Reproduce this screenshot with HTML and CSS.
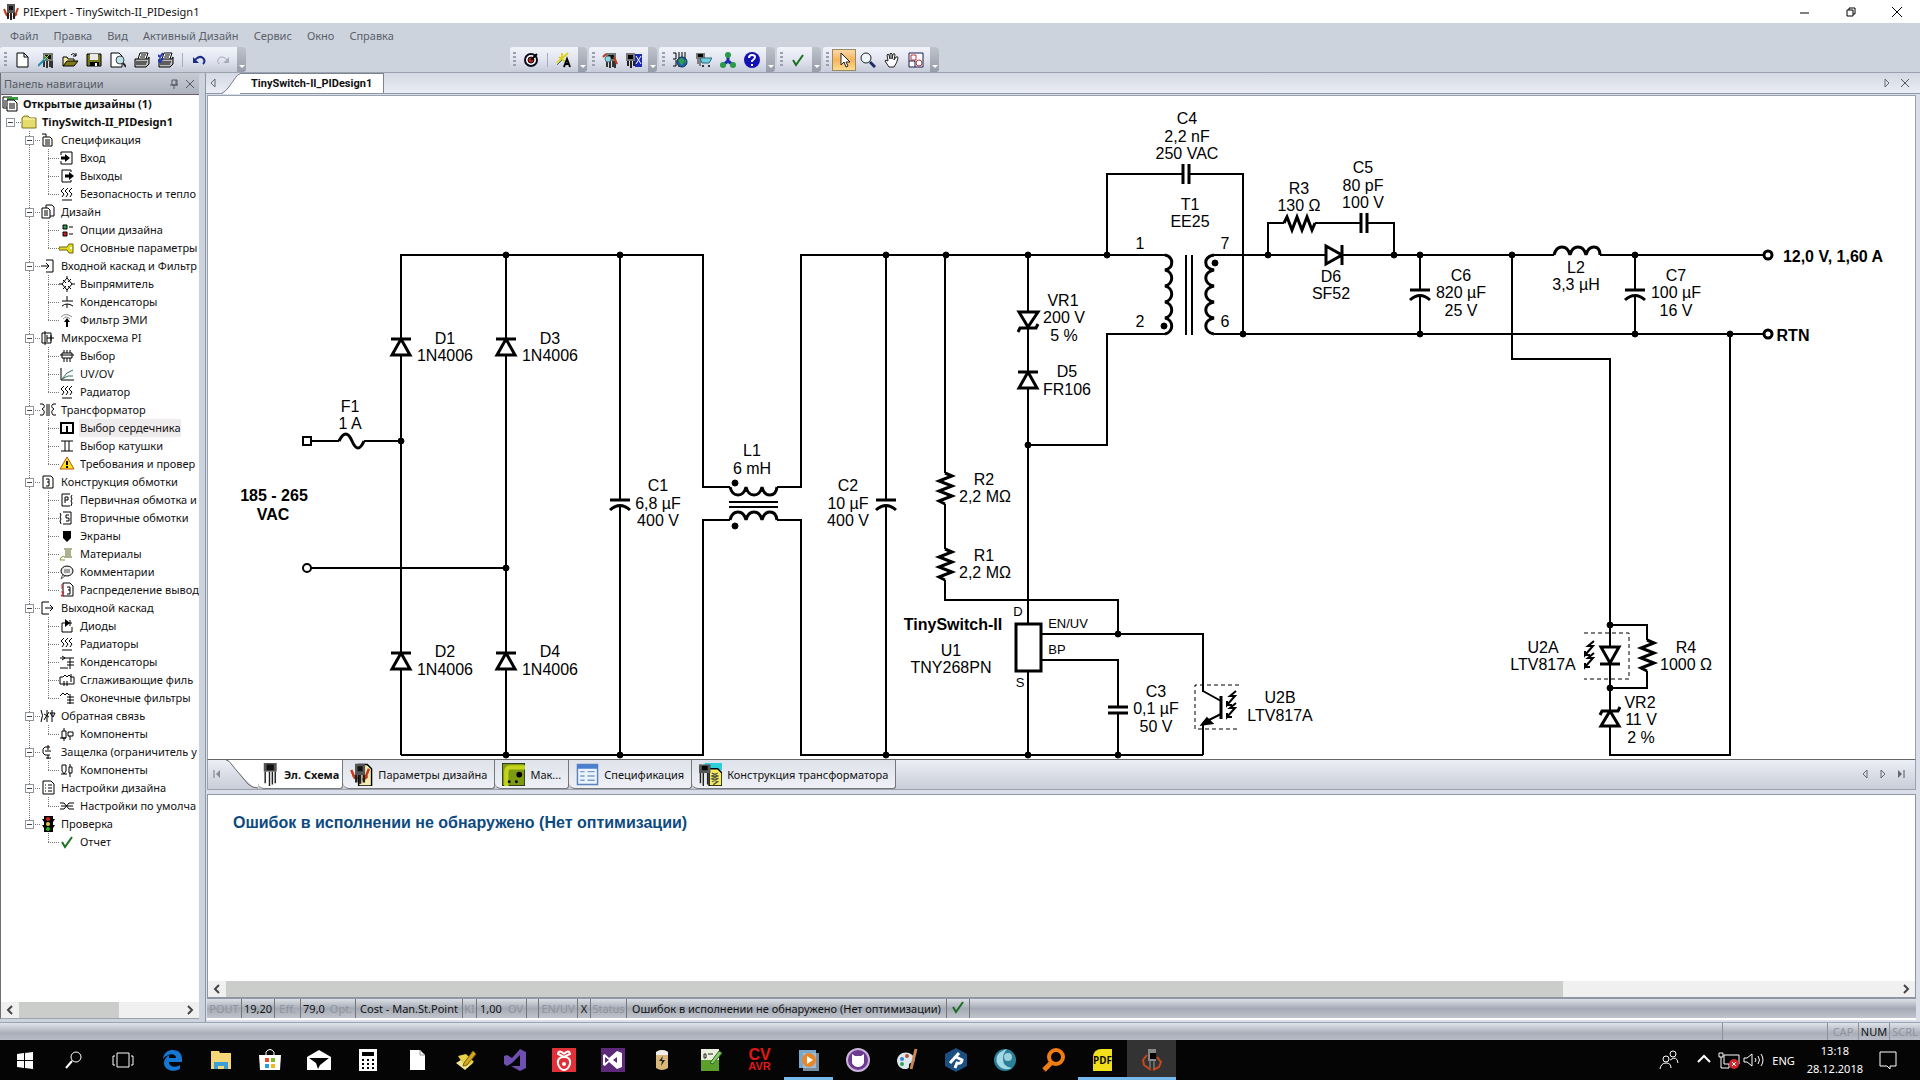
FILE: index.html
```html
<!DOCTYPE html>
<html lang="ru">
<head>
    <meta charset="UTF-8">
    <meta name="viewport" content="width=device-width, initial-scale=1.0">
    <title>PIExpert - TinySwitch-II_PIDesign1</title>
    <link rel="stylesheet" href="styles.css">
</head>
<body>
    <!-- icon sprites -->
    <svg class="sprites">
        <symbol id="chip" viewBox="0 0 16 16"><path d="M3 1h10v8H3z" fill="#777"/><path d="M5 3h6v4H5z" fill="#111"/><path d="M4 9v6M7 9v7M10 9v6M12 9v7" stroke="#333" stroke-width="2"/></symbol>
        <symbol id="longchip" viewBox="0 0 16 16"><path d="M4 0h9v6H4z" fill="#555"/><path d="M6 1h5v4H6z" fill="#111"/><path d="M5 6v8M8 6v10M10 6v9M12 6v8" stroke="#222"/></symbol>
        <symbol id="app" viewBox="0 0 16 16"><path d="M1 5l3 7M15 4l-3 8M2 9l4 3M14 10l-4 3" stroke="#c43a1c" stroke-width="2"/><path d="M4 0h8v9H4z" fill="#555"/><path d="M6 2h4v4H6z" fill="#111"/><path d="M5 9v6M8 9v7M11 9v6" stroke="#222" stroke-width="2"/></symbol>
        <symbol id="docs" viewBox="0 0 16 16"><path d="M1 1h9l2 2v9H1z" fill="#fff" stroke="#000"/><path d="M5 1h11v3H5z" fill="#3a9a3a"/><path d="M5 4h7l3 3v8H5z" fill="#fff" stroke="#000"/><path d="M7 8h6M7 10h6M7 12h6M3 4v7" stroke="#000"/></symbol>
        <symbol id="folder" viewBox="0 0 16 16"><path d="M1 4l2-2h4l2 2h6v10H1z" fill="#e6dc6e" stroke="#7d7720"/><path d="M2 5h12" stroke="#fffbc0"/></symbol>
        <symbol id="page" viewBox="0 0 16 16"><path d="M3 5h7l2 2v7H3zM2 2h4v3" fill="#fff" stroke="#000"/><path d="M5 8h5M5 10h5M5 12h5" stroke="#000"/></symbol>
        <symbol id="in" viewBox="0 0 16 16"><path d="M2 5V2h11v12H2v-3" fill="none" stroke="#000"/><path d="M2 8h5" stroke="#000" stroke-width="3"/><path d="M6 4l5 4-5 4z"/></symbol>
        <symbol id="out" viewBox="0 0 16 16"><path d="M12 4V2H3v12h9v-2" fill="none" stroke="#000"/><path d="M6 8h5" stroke="#000" stroke-width="3"/><path d="M10 4l5 4-5 4z"/></symbol>
        <symbol id="heat" viewBox="0 0 16 16"><path d="M5 2L2 5l3 3-2 3M9 2L6 5l3 3-2 3M13 2l-3 3 3 3-2 3M3 14h10" fill="none" stroke="#000"/></symbol>
        <symbol id="pages" viewBox="0 0 16 16"><path d="M6 1h6l2 2v9H6z" fill="#fff" stroke="#000"/><path d="M2 4h6l2 2v8H2z" fill="#fff" stroke="#000"/><path d="M4 7h4M4 9h4M4 11h4" stroke="#000"/></symbol>
        <symbol id="opts" viewBox="0 0 16 16"><path d="M4 3h4v4H4z" fill="#2da04a" stroke="#000"/><path d="M4 10h4v4H4z" fill="#c22" stroke="#000"/><path d="M10 5h4M10 12h4" stroke="#000"/></symbol>
        <symbol id="key" viewBox="0 0 16 16"><path d="M0 7h8l2-3h4v9h-4l-2-3H0z" fill="#e8da1c" stroke="#6b6410"/><path d="M11 7h2v2h-2z" fill="#fff"/></symbol>
        <symbol id="arrin" viewBox="0 0 16 16"><path d="M6 2h7v12H6M1 8h8M6 5l3 3-3 3" fill="none" stroke="#000"/></symbol>
        <symbol id="arrout" viewBox="0 0 16 16"><path d="M9 2H2v12h7M5 8h8M10 5l3 3-3 3" fill="none" stroke="#000"/></symbol>
        <symbol id="bridge" viewBox="0 0 16 16"><path d="M8 2L3 8l5 6 5-6zM0 8h3M13 8h3M8 0v2M8 14v2M4 4l3 3M9 10l3 3M12 3l-3 3M7 10l-3 3" fill="none" stroke="#000"/></symbol>
        <symbol id="capic" viewBox="0 0 16 16"><path d="M3 7h11M3 12q5-4 11 0M8 2v5M8 10v4" fill="none" stroke="#000"/></symbol>
        <symbol id="emi" viewBox="0 0 16 16"><path d="M2 5q5-5 11 0M4 7q3-4 7 0" fill="none" stroke="#888"/><path d="M8 8v7" stroke="#000" stroke-width="2"/><path d="M5 10l3-4 3 4z"/></symbol>
        <symbol id="ic" viewBox="0 0 16 16"><path d="M2 3h9v10H2zM5 1v14M7 5v7M7 8h7M11 5v6" fill="none" stroke="#000"/></symbol>
        <symbol id="dip" viewBox="0 0 16 16"><path d="M3 5h10v5H3zM5 2v3M8 2v3M11 2v3M5 10v4M8 10v4M11 10v4M1 7h14" fill="none" stroke="#000"/></symbol>
        <symbol id="graph" viewBox="0 0 16 16"><path d="M2 2v12h13" fill="none" stroke="#000"/><path d="M3 13l5-6 6-3M3 13l6-3h5" fill="none" stroke="#2b6d62"/></symbol>
        <symbol id="trafo" viewBox="0 0 16 16"><path d="M0 2h3q3 3-1 5 4 2 1 6H0M16 2h-3q-3 3 1 5-4 2-1 6h3M7 2v12M9 2v12" fill="none" stroke="#000"/></symbol>
        <symbol id="core" viewBox="0 0 16 16"><path d="M1 3h14M2 3v10h12V3M8 6v7" fill="none" stroke="#000" stroke-width="2"/></symbol>
        <symbol id="bobbin" viewBox="0 0 16 16"><path d="M2 3h12M2 13h12M6 3v10M10 3v10" fill="none" stroke="#000" stroke-width="1"/></symbol>
        <symbol id="warn" viewBox="0 0 16 16"><path d="M8 1l7 12H1z" fill="#ffe21c" stroke="#b4531c"/><path d="M8 5v4M8 10v2" stroke="#000" stroke-width="2"/></symbol>
        <symbol id="wind" viewBox="0 0 16 16"><path d="M3 2h8l2 2v10H3zM6 5h3v7H6M7 8h2" fill="none" stroke="#000"/></symbol>
        <symbol id="windp" viewBox="0 0 16 16"><path d="M11 2H3v12h8M6 11V5h3v3H6M13 3l-1 2 1 2-1 2 1 2-1 3" fill="none" stroke="#000"/></symbol>
        <symbol id="winds" viewBox="0 0 16 16"><path d="M4 2h8v12H4M10 5H7v3h3v3H7M1 3l1 2-1 2 1 2-1 2 1 3" fill="none" stroke="#000"/></symbol>
        <symbol id="shield" viewBox="0 0 16 16"><path d="M4 3h8v7l-4 4-4-4z"/></symbol>
        <symbol id="spool" viewBox="0 0 16 16"><path d="M5 3h8M6 5h6M6 7h6M6 9h6M5 11h8" stroke="#5f651c"/><path d="M5 10q-4 1-4 4h5" fill="none" stroke="#8c9432"/></symbol>
        <symbol id="bubble" viewBox="0 0 16 16"><ellipse cx="8" cy="7" rx="6" ry="5" fill="#eee" stroke="#000"/><path d="M4 10l-2 5 4-3M5 6h6M5 8h6" fill="none" stroke="#555"/></symbol>
        <symbol id="pins" viewBox="0 0 16 16"><path d="M4 1h7l3 3v10H4zM8 5h3v7H8M9 8h2" fill="none" stroke="#000"/><path d="M3 2v5M2 10h3l-3 4h3" fill="none" stroke="#c22"/></symbol>
        <symbol id="dio" viewBox="0 0 16 16"><path d="M6 5H3v9h10V9M6 5h7M11 2v6" fill="none" stroke="#000"/><path d="M6 1l5 4-5 4z"/></symbol>
        <symbol id="caps" viewBox="0 0 16 16"><path d="M1 4h14M3 2l3 2-3 2M8 8h7M8 11h7M11 4v11M1 14h8" fill="none" stroke="#000"/></symbol>
        <symbol id="smooth" viewBox="0 0 16 16"><path d="M1 5h3l2-2 2 2 2-2 2 2h3v7H1zM5 9v5M8 9v5M12 2v8" fill="none" stroke="#000"/></symbol>
        <symbol id="endf" viewBox="0 0 16 16"><path d="M1 6l3-3 2 2 2-2 2 2M8 7h7M8 10h7M11 4v10M8 13h7" fill="none" stroke="#000"/></symbol>
        <symbol id="fb" viewBox="0 0 16 16"><path d="M1 2q3 5 0 12M4 12l5-8M4 6l5 3M7 2v12M12 2v12M10 5h5l-2 4z" fill="none" stroke="#000"/></symbol>
        <symbol id="comp" viewBox="0 0 16 16"><path d="M3 5h4v7H3zM5 2v3M1 12h6M9 6h5v4H9zM11 10v4M5 12v3" fill="none" stroke="#000"/></symbol>
        <symbol id="clamp" viewBox="0 0 16 16"><path d="M10 3H5L3 5v4l2 2h5M8 1v5M5 7h6M8 11v4M6 14h5" fill="none" stroke="#000"/></symbol>
        <symbol id="comp2" viewBox="0 0 16 16"><path d="M3 3h4v6l-2 3-2-3zM2 12h6M11 2v3M10 5h3v6h-3zM11 11v4" fill="none" stroke="#000"/></symbol>
        <symbol id="list" viewBox="0 0 16 16"><path d="M3 1h8l3 3v10H3z" fill="#fff" stroke="#000"/><path d="M5 5h1M8 5h4M5 8h1M8 8h4M5 11h1M8 11h4" stroke="#000"/></symbol>
        <symbol id="deft" viewBox="0 0 16 16"><path d="M1 5h4l5 6h5M1 11h4l5-6h5M2 8h12" fill="none" stroke="#000"/></symbol>
        <symbol id="light" viewBox="0 0 16 16"><path d="M4 0h9v16H4zM2 3h2v3zM15 3h-2v3zM2 9h2v3zM15 9h-2v3z"/><circle cx="8" cy="3" r="2" fill="#d22"/><circle cx="8" cy="8" r="2" fill="#e0d040"/><circle cx="8" cy="13" r="2" fill="#2b2"/></symbol>
        <symbol id="check" viewBox="0 0 16 16"><path d="M3 8l3 5 7-10" fill="none" stroke="#16701c" stroke-width="2"/></symbol>

        <symbol id="new" viewBox="0 0 16 16"><path d="M3 1h7l4 4v10H3z" fill="#fff" stroke="#000"/><path d="M10 1v4h4" fill="none" stroke="#000"/></symbol>
        <symbol id="wiz" viewBox="0 0 16 16"><use href="#chip" width="16" height="16" x="2"/><path d="M0 14l9-9" stroke="#1e8fb0" stroke-width="2"/><path d="M6 3l5 5M11 3l-5 5" stroke="#b4d430"/></symbol>
        <symbol id="open" viewBox="0 0 16 16"><path d="M1 14V5h4l1 2h6v3" fill="#f2eb9a" stroke="#000"/><path d="M1 14l4-5h11l-4 5z" fill="#807a1a" stroke="#000"/><path d="M9 3q3-3 5 1M14 1v3h-3" fill="none" stroke="#000"/></symbol>
        <symbol id="save" viewBox="0 0 16 16"><path d="M1 2h14v12H1z" fill="#77771c" stroke="#000"/><path d="M4 2h8v6H4z" fill="#e8e8ee"/><path d="M4 10h9v4H4z"/><path d="M9 11h2v3H9z" fill="#fff"/></symbol>
        <symbol id="preview" viewBox="0 0 16 16"><path d="M1 1h8l3 3v11H1z" fill="#fff" stroke="#000"/><circle cx="10" cy="8" r="4" fill="#bde4e6" stroke="#444"/><path d="M13 11l3 4" stroke="#222" stroke-width="2"/></symbol>
        <symbol id="print" viewBox="0 0 16 16"><path d="M4 7l2-6h8l-2 6" fill="#fff" stroke="#000"/><path d="M1 7h13l1-2v7l-3 3H1z" fill="#bbb" stroke="#000"/><path d="M7 3h5M6 5h5M2 10h11M2 12h10" stroke="#000"/></symbol>
        <symbol id="prints" viewBox="0 0 16 16"><use href="#print" width="16" height="16"/><path d="M0 3l2 2 3-4M0 8l2 2 3-4" fill="none" stroke="#2236b8" stroke-width="2"/></symbol>
        <symbol id="undo" viewBox="0 0 16 16"><path d="M4 8q4-5 8-2 3 3 0 6" fill="none" stroke="#1b2c86" stroke-width="2"/><path d="M2 5v6h6z" fill="#1b2c86"/></symbol>
        <symbol id="redo" viewBox="0 0 16 16"><path d="M12 8Q8 3 4 6q-3 3 0 6" fill="none" stroke="#aab"/><path d="M14 5v6H8z" fill="#aab"/></symbol>
        <symbol id="target" viewBox="0 0 16 16"><circle cx="8" cy="8" r="6" fill="#fff" stroke="#0a0a20" stroke-width="2"/><circle cx="8" cy="8" r="3" fill="#c22" stroke="#000" stroke-width="1"/><path d="M8 8l6-6" stroke="#000" stroke-width="2"/></symbol>
        <symbol id="wand" viewBox="0 0 16 16"><path d="M1 11L12 1M3 5l7 5M6 1v6" stroke="#e0d01c" stroke-width="2"/><path d="M1 13l5-5" stroke="#2b6fc0"/><path d="M8 15l3-8 3 8M9 12h4" fill="none" stroke="#000" stroke-width="2"/></symbol>
        <symbol id="chipmag" viewBox="0 0 16 16"><use href="#chip" width="16" height="16" x="1"/><circle cx="6" cy="7" r="3" fill="#8fd6e6" stroke="#577"/><path d="M1 5l3-3M12 5l3 7" stroke="#c43a1c" stroke-width="2"/></symbol>
        <symbol id="chipxl" viewBox="0 0 16 16"><path d="M9 2h7v13H9z" fill="#1b2ab0"/><path d="M10 4l5 8M15 4l-5 8" stroke="#fff"/><path d="M0 1h9v8H0z" fill="#777"/><path d="M2 3h5v4H2z"/><path d="M2 9v5M5 9v7M8 9v5" stroke="#222" stroke-width="2"/></symbol>
        <symbol id="globe" viewBox="0 0 16 16"><path d="M1 1h3v6H1m3 1v6H1M7 0v15M10 0v9M13 0v7" fill="none" stroke="#000"/><circle cx="10" cy="10" r="5" fill="#1f5fb0" stroke="#0d2c50"/><path d="M7 8l3-2 2 3-2 4-2-2zM13 8l1 3" fill="#2ba04a" stroke="#2ba04a"/></symbol>
        <symbol id="cart" viewBox="0 0 16 16"><path d="M0 1h9v6H0z" fill="#777"/><path d="M2 2h5v3H2z"/><path d="M2 7v5M4 7v7" stroke="#222"/><path d="M4 6h12l-3 5H6z" fill="#6cd0e0" stroke="#367"/><circle cx="7" cy="14" r="1"/><circle cx="13" cy="14" r="1"/></symbol>
        <symbol id="net" viewBox="0 0 16 16"><path d="M8 4v5l-5 4M8 9l5 4" fill="none" stroke="#1b2ab0" stroke-width="3"/><circle cx="8" cy="3" r="3" fill="#2a9a4a"/><circle cx="3" cy="13" r="3" fill="#2a9a4a"/><circle cx="13" cy="13" r="3" fill="#2a9a4a"/></symbol>
        <symbol id="help" viewBox="0 0 16 16"><circle cx="8" cy="8" r="8" fill="#1212b4"/><path d="M5 6q0-3 3-3t3 2q0 2-3 4v1M8 12v2" fill="none" stroke="#fff" stroke-width="2"/></symbol>
        <symbol id="arrow" viewBox="0 0 16 16"><path d="M5 1v12l3-3 2 5 2-1-2-4h4z" fill="#fff" stroke="#222"/></symbol>
        <symbol id="mag" viewBox="0 0 16 16"><circle cx="6" cy="6" r="5" fill="#eef6fa" stroke="#222"/><path d="M10 10l5 5" stroke="#1b2c66" stroke-width="3"/></symbol>
        <symbol id="hand" viewBox="0 0 16 16"><path d="M5 15L1 9q0-2 3 0L3 3q1-2 2 0l1 4V2q1-2 2 0v5l1-5q2-1 2 1l-1 5 2-3q2-1 2 1-1 5-4 9z" fill="#fff" stroke="#222"/></symbol>
        <symbol id="fit" viewBox="0 0 16 16"><path d="M1 1h14v14H1z" fill="#fff" stroke="#1b1b50"/><path d="M3 3h5v5H3z" fill="none" stroke="#b4383a"/><circle cx="11" cy="11" r="3" fill="none" stroke="#b4383a"/><path d="M1 9h6v6" fill="none" stroke="#1b1b50"/></symbol>
        <symbol id="tri-l" viewBox="0 0 10 10"><path d="M7 1v8L3 5z" fill="none" stroke="#667"/></symbol>
        <symbol id="tri-r" viewBox="0 0 10 10"><path d="M3 1v8l4-4z" fill="none" stroke="#667"/></symbol>
        <symbol id="x" viewBox="0 0 10 10"><path d="M1 1l8 8M9 1L1 9" fill="none" stroke="#556"/></symbol>
        <symbol id="chev-l" viewBox="0 0 10 10"><path d="M7 1L3 5l4 4" fill="none" stroke="#444" stroke-width="2"/></symbol>
        <symbol id="chev-r" viewBox="0 0 10 10"><path d="M3 1l4 4-4 4" fill="none" stroke="#444" stroke-width="2"/></symbol>

        <!-- schematic parts -->
        <g id="diode"><path d="M0 0l9 16H-9z" fill="#fff"/><path d="M-10 0h20"/></g>
        <g id="resistor"><path d="M0 0l7 3-13 5 13 5-13 5 13 5-13 5 6 3" fill="none"/></g>
        <g id="polcap"><path d="M-10 0h20M-10 10Q0 1 10 10" fill="none"/></g>
        <g id="rays"><path d="M1236 691l-6 5h5l-8 9v-4m0 4h5M1236 703l-6 5h5l-8 9v-4m0 4h5"/></g>
    </svg>

    <div class="window">
        <header class="titlebar">
            <svg class="icon"><use href="#app"/></svg>
            <span class="caption">PIExpert - TinySwitch-II_PIDesign1</span>
            <button class="winbtn" aria-label="Свернуть"><svg viewBox="0 0 10 10"><path d="M0 6h9" stroke="#000"/></svg></button>
            <button class="winbtn" aria-label="Восстановить"><svg viewBox="0 0 10 10"><path d="M1 3h6v6H1zM3 3V1h6v6H7" fill="none" stroke="#000"/></svg></button>
            <button class="winbtn" aria-label="Закрыть"><svg viewBox="0 0 10 10"><path d="M0 0l10 10M10 0L0 10" stroke="#000"/></svg></button>
        </header>

        <nav class="menu">
            <a href="#">Файл</a><a href="#">Правка</a><a href="#">Вид</a><a href="#">Активный Дизайн</a><a href="#">Сервис</a><a href="#">Окно</a><a href="#">Справка</a>
        </nav>

        <div class="toolbars">
            <div class="bar bar-main">
                <i class="grip"></i>
                <button aria-label="Новый"><svg class="icon"><use href="#new"/></svg></button>
                <button aria-label="Мастер"><svg class="icon"><use href="#wiz"/></svg></button>
                <button aria-label="Открыть"><svg class="icon"><use href="#open"/></svg></button>
                <button aria-label="Сохранить"><svg class="icon"><use href="#save"/></svg></button>
                <button aria-label="Просмотр"><svg class="icon"><use href="#preview"/></svg></button>
                <button aria-label="Печать"><svg class="icon"><use href="#print"/></svg></button>
                <button aria-label="Печать выбранного"><svg class="icon"><use href="#prints"/></svg></button>
                <i class="sep"></i>
                <button aria-label="Отменить"><svg class="icon"><use href="#undo"/></svg></button>
                <button aria-label="Повторить"><svg class="icon"><use href="#redo"/></svg></button>
                <i class="cap"></i>
            </div>
            <div class="bar">
                <i class="grip"></i>
                <button aria-label="Оптимизация"><svg class="icon"><use href="#target"/></svg></button>
                <i class="sep"></i>
                <button aria-label="Авто"><svg class="icon"><use href="#wand"/></svg></button>
                <i class="cap"></i>
            </div>
            <div class="bar">
                <i class="grip"></i>
                <button aria-label="Поиск микросхемы"><svg class="icon"><use href="#chipmag"/></svg></button>
                <button aria-label="Экспорт"><svg class="icon"><use href="#chipxl"/></svg></button>
                <i class="cap"></i>
            </div>
            <div class="bar">
                <i class="grip"></i>
                <button aria-label="Сайт"><svg class="icon"><use href="#globe"/></svg></button>
                <button aria-label="Заказ"><svg class="icon"><use href="#cart"/></svg></button>
                <button aria-label="Сеть"><svg class="icon"><use href="#net"/></svg></button>
                <button aria-label="Помощь"><svg class="icon"><use href="#help"/></svg></button>
                <i class="cap"></i>
            </div>
            <div class="bar">
                <i class="grip"></i>
                <button aria-label="Проверить"><svg class="icon"><use href="#check"/></svg></button>
                <i class="cap"></i>
            </div>
            <div class="bar">
                <i class="grip"></i>
                <button class="on" aria-label="Выделение"><svg class="icon"><use href="#arrow"/></svg></button>
                <button aria-label="Масштаб"><svg class="icon"><use href="#mag"/></svg></button>
                <button aria-label="Рука"><svg class="icon"><use href="#hand"/></svg></button>
                <button aria-label="Вписать"><svg class="icon"><use href="#fit"/></svg></button>
                <i class="cap"></i>
            </div>
        </div>

        <main class="main">
            <aside class="panel">
                <div class="panel-head">
                    <span>Панель навигации</span>
                    <button aria-label="Закрепить"><svg class="mini" viewBox="0 0 10 10"><path d="M3 1h5v5H3zM7 1v5M1 6h8M5 6v4" fill="none" stroke="#556"/></svg></button>
                    <button aria-label="Закрыть панель"><svg class="mini"><use href="#x"/></svg></button>
                </div>
                <div class="tree">
                    <div class="row root"><svg class="icon"><use href="#docs"/></svg><b>Открытые дизайны (1)</b></div>
                    <div class="row design"><button class="box"></button><i class="dash"></i><svg class="icon"><use href="#folder"/></svg><b>TinySwitch-II_PIDesign1</b></div>
                    <ul class="groups">
                        <li>
                            <div class="row"><button class="box"></button><i class="dash"></i><svg class="icon"><use href="#page"/></svg><span>Спецификация</span></div>
                            <ul class="items">
                                <li><svg class="icon"><use href="#in"/></svg><span>Вход</span></li>
                                <li><svg class="icon"><use href="#out"/></svg><span>Выходы</span></li>
                                <li><svg class="icon"><use href="#heat"/></svg><span>Безопасность и тепло</span></li>
                            </ul>
                        </li>
                        <li>
                            <div class="row"><button class="box"></button><i class="dash"></i><svg class="icon"><use href="#pages"/></svg><span>Дизайн</span></div>
                            <ul class="items">
                                <li><svg class="icon"><use href="#opts"/></svg><span>Опции дизайна</span></li>
                                <li><svg class="icon"><use href="#key"/></svg><span>Основные параметры</span></li>
                            </ul>
                        </li>
                        <li>
                            <div class="row"><button class="box"></button><i class="dash"></i><svg class="icon"><use href="#arrin"/></svg><span>Входной каскад и Фильтр</span></div>
                            <ul class="items">
                                <li><svg class="icon"><use href="#bridge"/></svg><span>Выпрямитель</span></li>
                                <li><svg class="icon"><use href="#capic"/></svg><span>Конденсаторы</span></li>
                                <li><svg class="icon"><use href="#emi"/></svg><span>Фильтр ЭМИ</span></li>
                            </ul>
                        </li>
                        <li>
                            <div class="row"><button class="box"></button><i class="dash"></i><svg class="icon"><use href="#ic"/></svg><span>Микросхема PI</span></div>
                            <ul class="items">
                                <li><svg class="icon"><use href="#dip"/></svg><span>Выбор</span></li>
                                <li><svg class="icon"><use href="#graph"/></svg><span>UV/OV</span></li>
                                <li><svg class="icon"><use href="#heat"/></svg><span>Радиатор</span></li>
                            </ul>
                        </li>
                        <li>
                            <div class="row"><button class="box"></button><i class="dash"></i><svg class="icon"><use href="#trafo"/></svg><span>Трансформатор</span></div>
                            <ul class="items">
                                <li><svg class="icon"><use href="#core"/></svg><span class="selected">Выбор сердечника</span></li>
                                <li><svg class="icon"><use href="#bobbin"/></svg><span>Выбор катушки</span></li>
                                <li><svg class="icon"><use href="#warn"/></svg><span>Требования и провер</span></li>
                            </ul>
                        </li>
                        <li>
                            <div class="row"><button class="box"></button><i class="dash"></i><svg class="icon"><use href="#wind"/></svg><span>Конструкция обмотки</span></div>
                            <ul class="items">
                                <li><svg class="icon"><use href="#windp"/></svg><span>Первичная обмотка и</span></li>
                                <li><svg class="icon"><use href="#winds"/></svg><span>Вторичные обмотки</span></li>
                                <li><svg class="icon"><use href="#shield"/></svg><span>Экраны</span></li>
                                <li><svg class="icon"><use href="#spool"/></svg><span>Материалы</span></li>
                                <li><svg class="icon"><use href="#bubble"/></svg><span>Комментарии</span></li>
                                <li><svg class="icon"><use href="#pins"/></svg><span>Распределение вывод</span></li>
                            </ul>
                        </li>
                        <li>
                            <div class="row"><button class="box"></button><i class="dash"></i><svg class="icon"><use href="#arrout"/></svg><span>Выходной каскад</span></div>
                            <ul class="items">
                                <li><svg class="icon"><use href="#dio"/></svg><span>Диоды</span></li>
                                <li><svg class="icon"><use href="#heat"/></svg><span>Радиаторы</span></li>
                                <li><svg class="icon"><use href="#caps"/></svg><span>Конденсаторы</span></li>
                                <li><svg class="icon"><use href="#smooth"/></svg><span>Сглаживающие филь</span></li>
                                <li><svg class="icon"><use href="#endf"/></svg><span>Оконечные фильтры</span></li>
                            </ul>
                        </li>
                        <li>
                            <div class="row"><button class="box"></button><i class="dash"></i><svg class="icon"><use href="#fb"/></svg><span>Обратная связь</span></div>
                            <ul class="items">
                                <li><svg class="icon"><use href="#comp"/></svg><span>Компоненты</span></li>
                            </ul>
                        </li>
                        <li>
                            <div class="row"><button class="box"></button><i class="dash"></i><svg class="icon"><use href="#clamp"/></svg><span>Защелка (ограничитель у</span></div>
                            <ul class="items">
                                <li><svg class="icon"><use href="#comp2"/></svg><span>Компоненты</span></li>
                            </ul>
                        </li>
                        <li>
                            <div class="row"><button class="box"></button><i class="dash"></i><svg class="icon"><use href="#list"/></svg><span>Настройки дизайна</span></div>
                            <ul class="items">
                                <li><svg class="icon"><use href="#deft"/></svg><span>Настройки по умолча</span></li>
                            </ul>
                        </li>
                        <li>
                            <div class="row"><button class="box"></button><i class="dash"></i><svg class="icon"><use href="#light"/></svg><span>Проверка</span></div>
                            <ul class="items">
                                <li><svg class="icon"><use href="#check"/></svg><span>Отчет</span></li>
                            </ul>
                        </li>
                    </ul>
                </div>
                <div class="hscroll"><button aria-label="Влево"><svg class="mini"><use href="#chev-l"/></svg></button><div class="track"><div class="thumb"></div></div><button aria-label="Вправо"><svg class="mini"><use href="#chev-r"/></svg></button></div>
            </aside>

            <section class="work">
                <div class="doctabs">
                    <button class="arr back" aria-label="Назад"><svg class="mini"><use href="#tri-l"/></svg></button>
                    <svg class="slope" viewBox="0 0 18 21"><path d="M0 21Q3 20 6 16L14 4q2-3 4-3v20z" fill="#fff"/><path d="M0 20Q3 19 6 15L14 4q2-3 4-3" fill="none" stroke="#7d8490"/></svg>
                    <button class="doctab">TinySwitch-II_PIDesign1</button>
                    <span class="fill"></span>
                    <button class="arr" aria-label="Вперёд"><svg class="mini"><use href="#tri-r"/></svg></button>
                    <button class="arr" aria-label="Закрыть вкладку"><svg class="mini"><use href="#x"/></svg></button>
                </div>

                <div class="sheet">
                    <svg class="schematic" viewBox="208 96 1707 663">
                        <g class="wire">
                            <!-- mains input and bridge -->
                            <path d="M311 441h28M364 441h37M311 568h195"/>
                            <path d="M401 755V255h302v232h27M506 255v500M620 255v245M620 506v249M401 755h302V520h27"/>
                            <!-- input filter output -->
                            <path d="M777 487h24V255h364M777 520h24v235h402M886 255v245M886 506v249"/>
                            <!-- primary side -->
                            <path d="M945 255v218M945 504v45M945 580v20h173v34"/>
                            <path d="M1028 255v368M1028 672v83M1028 445h79V334h58M1107 255v-81h76M1189 174h54v160"/>
                            <path d="M1041 634h162v58M1041 660h77v46M1118 713v42M1203 724v31"/>
                            <path d="M1186 255v80M1192 255v80"/>
                            <!-- secondary side -->
                            <path d="M1214 255h340M1600 255h163M1214 334h549M1268 255v-32h16M1315 223h46M1367 223h27v32"/>
                            <path d="M1420 255v35M1420 295v39M1635 255v35M1635 295v39"/>
                            <path d="M1512 255v104h98v396h120V334M1610 625h37v15M1647 671v17h-37"/>
                        </g>
                        <g class="part">
                            <path d="M303 437h8v8h-8z" fill="#fff" stroke-width="2"/>
                            <circle cx="307" cy="568" r="4" fill="#fff" stroke-width="2"/>
                            <circle cx="1768" cy="255" r="4" fill="#fff"/>
                            <circle cx="1768" cy="334" r="4" fill="#fff"/>
                            <path d="M339 441q7-14 13 0t12 0" fill="none"/>
                            <use href="#diode" x="401" y="339"/>
                            <use href="#diode" x="506" y="339"/>
                            <use href="#diode" x="401" y="653"/>
                            <use href="#diode" x="506" y="653"/>
                            <use href="#diode" x="1028" y="372"/>
                            <use href="#resistor" x="945" y="473"/>
                            <use href="#resistor" x="945" y="549"/>
                            <use href="#resistor" x="1647" y="640"/>
                            <use href="#polcap" x="620" y="500"/>
                            <use href="#polcap" x="886" y="500"/>
                            <use href="#polcap" x="1420" y="290"/>
                            <use href="#polcap" x="1635" y="290"/>
                            <path d="M730 487q2 8 8 8t8-8q2 8 8 8t8-8q2 8 8 8t7-8M730 520q2-8 8-8t8 8q2-8 8-8t8 8q2-8 8-8t7 8" fill="none"/>
                            <path d="M729 502h49M729 507h49" stroke-width="2"/>
                            <path d="M1019 312h19l-10 15z" fill="#fff"/>
                            <path d="M1018 332l2-4h16l2-4" fill="none"/>
                            <path d="M1165 255c9 2 9 13 0 15c9 2 9 14 0 16c9 2 9 14 0 16c9 2 9 14 0 16c9 2 9 14 0 16" fill="none"/>
                            <path d="M1214 255c-11 2-11 13 0 15c-11 2-11 14 0 16c-11 2-11 14 0 16c-11 2-11 14 0 16c-11 2-11 14 0 16" fill="none"/>
                            <path d="M1183 164v20M1189 164v20M1361 213v20M1367 213v20M1108 707h20M1108 713h20"/>
                            <path d="M1284 223l3-6 5 13 5-13 5 13 5-13 5 13 3-7" fill="none"/>
                            <path d="M1326 246l16 9-16 9zM1342 245v20" fill="#fff"/>
                            <path d="M1554 255q2-8 8-8t8 8q2-8 8-8t8 8q2-8 8-8t6 8" fill="none"/>
                            <path d="M1016 624h25v47h-25z" fill="#fff"/>
                            <path d="M1203 691l18 10M1221 714l-18 9" fill="none" stroke-width="2"/>
                            <path d="M1221 696v23"/>
                            <path d="M1203 724l4-5 4 4z"/>
                            <path d="M1601 647h18l-9 16zM1600 664h20" fill="#fff"/>
                            <path d="M1610 711l9 15h-18z" fill="#fff"/>
                            <path d="M1600 715l2-4h16l2-4" fill="none"/>
                        </g>
                        <g class="thin">
                            <path d="M1239 685h-44v44h44M1584 633h45v46h-45" stroke-dasharray="4 3"/>
                        </g>
                        <g class="wire">
                            <use href="#rays"/>
                            <use href="#rays" x="358" y="-50"/>
                        </g>
                        <g class="dots">
                            <circle cx="506" cy="255" r="3"/><circle cx="620" cy="255" r="3"/><circle cx="401" cy="441" r="3"/><circle cx="506" cy="568" r="3"/>
                            <circle cx="506" cy="755" r="3"/><circle cx="620" cy="755" r="3"/><circle cx="886" cy="255" r="3"/><circle cx="946" cy="255" r="3"/>
                            <circle cx="1028" cy="255" r="3"/><circle cx="1107" cy="255" r="3"/><circle cx="1028" cy="445" r="3"/><circle cx="886" cy="755" r="3"/>
                            <circle cx="1028" cy="755" r="3"/><circle cx="1118" cy="755" r="3"/><circle cx="1118" cy="634" r="3"/><circle cx="1243" cy="334" r="3"/>
                            <circle cx="1268" cy="255" r="3"/><circle cx="1394" cy="255" r="3"/><circle cx="1420" cy="255" r="3"/><circle cx="1512" cy="255" r="3"/>
                            <circle cx="1635" cy="255" r="3"/><circle cx="1420" cy="334" r="3"/><circle cx="1635" cy="334" r="3"/><circle cx="1730" cy="334" r="3"/>
                            <circle cx="1610" cy="625" r="3"/><circle cx="1610" cy="688" r="3"/><circle cx="735" cy="483" r="3"/><circle cx="735" cy="526" r="3"/>
                            <circle cx="1164" cy="326" r="3"/><circle cx="1215" cy="263" r="3"/>
                        </g>
                        <g class="label">
                            <text x="445" y="344">D1</text><text x="445" y="361">1N4006</text>
                            <text x="550" y="344">D3</text><text x="550" y="361">1N4006</text>
                            <text x="445" y="657">D2</text><text x="445" y="675">1N4006</text>
                            <text x="550" y="657">D4</text><text x="550" y="675">1N4006</text>
                            <text x="350" y="412">F1</text><text x="350" y="429">1 A</text>
                            <text x="752" y="456">L1</text><text x="752" y="474">6 mH</text>
                            <text x="658" y="491">C1</text><text x="658" y="509">6,8 µF</text><text x="658" y="526">400 V</text>
                            <text x="848" y="491">C2</text><text x="848" y="509">10 µF</text><text x="848" y="526">400 V</text>
                            <text x="984" y="485">R2</text><text x="985" y="502">2,2 MΩ</text>
                            <text x="984" y="561">R1</text><text x="985" y="578">2,2 MΩ</text>
                            <text x="1063" y="306">VR1</text><text x="1064" y="323">200 V</text><text x="1064" y="341">5 %</text>
                            <text x="1067" y="377">D5</text><text x="1067" y="395">FR106</text>
                            <text x="1187" y="124">C4</text><text x="1187" y="142">2,2 nF</text><text x="1187" y="159">250 VAC</text>
                            <text x="1190" y="210">T1</text><text x="1190" y="227">EE25</text>
                            <text x="1140" y="249">1</text><text x="1140" y="327">2</text>
                            <text x="1225" y="249">7</text><text x="1225" y="327">6</text>
                            <text x="1299" y="194">R3</text><text x="1299" y="211">130 Ω</text>
                            <text x="1363" y="173">C5</text><text x="1363" y="191">80 pF</text><text x="1363" y="208">100 V</text>
                            <text x="1331" y="282">D6</text><text x="1331" y="299">SF52</text>
                            <text x="1461" y="281">C6</text><text x="1461" y="298">820 µF</text><text x="1461" y="316">25 V</text>
                            <text x="1576" y="273">L2</text><text x="1576" y="290">3,3 µH</text>
                            <text x="1676" y="281">C7</text><text x="1676" y="298">100 µF</text><text x="1676" y="316">16 V</text>
                            <text x="951" y="656">U1</text><text x="951" y="673">TNY268PN</text>
                            <text x="1156" y="697">C3</text><text x="1156" y="714">0,1 µF</text><text x="1156" y="732">50 V</text>
                            <text x="1280" y="703">U2B</text><text x="1280" y="721">LTV817A</text>
                            <text x="1543" y="653">U2A</text><text x="1543" y="670">LTV817A</text>
                            <text x="1686" y="653">R4</text><text x="1686" y="670">1000 Ω</text>
                            <text x="1640" y="708">VR2</text><text x="1641" y="725">11 V</text><text x="1641" y="743">2 %</text>
                        </g>
                        <g class="label pin">
                            <text x="1018" y="616">D</text><text x="1020" y="687">S</text>
                            <text x="1068" y="628">EN/UV</text><text x="1057" y="654">BP</text>
                        </g>
                        <g class="label strong">
                            <text x="274" y="501">185 - 265</text><text x="273" y="520">VAC</text>
                            <text x="953" y="630">TinySwitch-II</text>
                            <text x="1833" y="262">12,0 V, 1,60 A</text><text x="1793" y="341">RTN</text>
                        </g>
                    </svg>
                </div>

                <div class="viewtabs">
                    <button class="arr" aria-label="В начало"><svg class="mini" viewBox="0 0 10 10"><path d="M2 1v8" stroke="#778"/><path d="M8 1v8L4 5z" fill="#889"/></svg></button>
                    <svg class="viewslope" viewBox="0 0 32 29"><path d="M0 0l22 22q6 6 10 6V0z" fill="#fff"/><path d="M0 0q3 0 6 5l16 19q4 4 10 4" fill="none" stroke="#666"/></svg>
                    <button class="viewtab active"><svg class="tabicon"><use href="#longchip"/></svg>Эл. Схема</button>
                    <button class="viewtab"><svg class="tabicon" viewBox="0 0 16 16"><path d="M6 1h6l3 3v12H6z" fill="#f3ecb0" stroke="#000"/><use href="#app" width="14" height="15"/></svg>Параметры дизайна</button>
                    <button class="viewtab"><svg class="tabicon" viewBox="0 0 16 16"><path d="M0 0h16v16H0z" fill="#7d9a14" stroke="#222"/><path d="M3 16V6q0-3 3-3h10" fill="none" stroke="#c4d41c" stroke-width="3"/><circle cx="12" cy="8" r="2"/><circle cx="5" cy="13" r="1"/><circle cx="10" cy="13" r="1"/></svg>Мак...</button>
                    <button class="viewtab"><svg class="tabicon" viewBox="0 0 16 16"><path d="M1 1h14v14H1z" fill="#eaf2fc" stroke="#5b83bd"/><path d="M1 1h14v3H1z" fill="#4a7fd0"/><path d="M3 6h3M8 6h5M3 9h3M8 9h5M3 12h3M8 12h5" stroke="#7f9cc8"/></svg>Спецификация</button>
                    <button class="viewtab"><svg class="tabicon" viewBox="0 0 16 16"><path d="M4 0h12v5H4z" fill="#2bd0dc"/><path d="M7 4h6l3 3v9H7z" fill="#f3ec60" stroke="#000"/><path d="M9 7l4 2-4 2 4 2-3 2M13 7l-4 2 4 2-4 2" fill="none" stroke="#554"/><path d="M0 1h8v6H0z" fill="#555"/><path d="M2 2h4v3H2z"/><path d="M1 7v7M3 7v9M6 7v8" stroke="#222"/></svg>Конструкция трансформатора</button>
                    <span class="fill"></span>
                    <button class="arr" aria-label="Предыдущая"><svg class="mini"><use href="#tri-l"/></svg></button>
                    <button class="arr" aria-label="Следующая"><svg class="mini"><use href="#tri-r"/></svg></button>
                    <button class="arr" aria-label="В конец"><svg class="mini" viewBox="0 0 10 10"><path d="M8 1v8" stroke="#556"/><path d="M2 1v8l4-4z" fill="#667"/></svg></button>
                </div>

                <div class="output">
                    <p>Ошибок в исполнении не обнаружено (Нет оптимизации)</p>
                    <div class="hscroll"><button aria-label="Влево"><svg class="mini"><use href="#chev-l"/></svg></button><div class="track"><div class="thumb wide"></div></div><button aria-label="Вправо"><svg class="mini"><use href="#chev-r"/></svg></button></div>
                </div>

                <div class="results">
                    <span class="off w35">POUT</span><span class="w33">19,20</span><span class="off w24">Eff.</span><span class="w24 nosep">79,0</span><span class="off w31">Opt.</span>
                    <span class="w106">Cost - Man.St.Point</span><span class="off w14">KI</span><span class="w28 nosep">1,00</span><span class="off w22">OV</span><span class="off w12"></span>
                    <span class="off w39">EN/UV</span><span class="w11">X</span><span class="off w38">Status</span><span class="w320">Ошибок в исполнении не обнаружено (Нет оптимизации)</span>
                    <span class="w23"><svg class="icon"><use href="#check"/></svg></span>
                </div>
            </section>
        </main>

        <footer class="status">
            <span class="wide-cell"></span><span class="off">CAP</span><span>NUM</span><span class="off">SCRL</span>
        </footer>
    </div>

    <div class="taskbar">
        <button aria-label="Пуск"><svg viewBox="0 0 24 24"><path d="M4 6l7-1v7H4zM12 5l8-1v8h-8zM4 13h7v7l-7-1zM12 13h8v8l-8-1z" fill="#fff"/></svg></button>
        <button aria-label="Поиск"><svg viewBox="0 0 24 24"><circle cx="14" cy="9" r="5" fill="none" stroke="#fff" stroke-width="1"/><path d="M10 13l-6 7" stroke="#fff" stroke-width="2"/></svg></button>
        <button aria-label="Задачи"><svg viewBox="0 0 24 24"><path d="M6 5h12v14H6zM4 8H2v9h2M20 8h2v9h-2" fill="none" stroke="#fff"/></svg></button>
        <button aria-label="Edge"><svg viewBox="0 0 24 24"><path d="M3 11C4 4 8 2 13 2c6 0 9 4 9 9v3H9c0 5 7 6 11 3v4c-7 4-16 1-16-6 0-4 3-7 6-8-1 1-1 2-1 3h7c0-5-8-5-13 1z" fill="#1577d2"/></svg></button>
        <button aria-label="Проводник"><svg viewBox="0 0 24 24"><path d="M2 3h8l1 2h11v16H2z" fill="#f4d778"/><path d="M5 21v-7h14v7h-4v-3H9v3z" fill="#3d9fd8"/></svg></button>
        <button aria-label="Магазин"><svg viewBox="0 0 24 24"><path d="M1 7h22l-1 15H2z" fill="#fff"/><path d="M8 7V4q4-5 8 0v3" fill="none" stroke="#fff"/><path d="M7 10h4v4H7z" fill="#e8502a"/><path d="M13 10h4v4h-4z" fill="#7db82a"/><path d="M7 16h4v4H7z" fill="#2a9fe0"/><path d="M13 16h4v4h-4z" fill="#f4b81c"/></svg></button>
        <button aria-label="Почта"><svg viewBox="0 0 24 24"><path d="M0 9l12-7 12 7v13H0z" fill="#fff"/><path d="M2 10h20l-9 7-2 4-2-6z" fill="#000"/></svg></button>
        <button aria-label="Калькулятор"><svg viewBox="0 0 24 24"><path d="M3 1h18v22H3z" fill="#fff"/><path d="M6 4h12v4H6zM6 11h2v2H6zM11 11h2v2h-2zM16 11h2v2h-2zM6 15h2v2H6zM11 15h2v2h-2zM16 15h2v2h-2zM6 19h2v2H6zM11 19h2v2h-2zM16 19h2v2h-2z"/></svg></button>
        <button aria-label="Документ"><svg viewBox="0 0 24 24"><path d="M5 2h10l5 5v15H5z" fill="#fff"/><path d="M15 2v5h5" fill="none" stroke="#999"/></svg></button>
        <button aria-label="Заметки"><svg viewBox="0 0 24 24"><path d="M2 15l8-5 9 5-8 7z" fill="#f0e49a"/><path d="M4 8l8-2 8 8-9 5z" fill="#e8d048"/><path d="M10 15L19 3l3 3-9 11-4 1z" fill="#d2a81c" stroke="#7d6210"/></svg></button>
        <button aria-label="Visual Studio"><svg viewBox="0 0 24 24"><path d="M17 1l6 3v16l-6 3-9-5h9V7l-8 8-5 3-3-2V8l3-1 5 3z" fill="#6f4fb0"/></svg></button>
        <button aria-label="Raspberry"><svg viewBox="0 0 24 24"><path d="M0 0h24v24H0z" fill="#e03038"/><path d="M12 6q-5-5-6 0l6 3 6-3q-1-5-6 0" fill="none" stroke="#fff" stroke-width="2"/><path d="M12 9q7 0 6 7-2 6-6 6t-6-6q-1-7 6-7z" fill="none" stroke="#fff" stroke-width="2"/><circle cx="12" cy="16" r="2" fill="#fff"/></svg></button>
        <button aria-label="Visual Studio 2013"><svg viewBox="0 0 24 24"><path d="M0 0h24v24H0z" fill="#5c2a78"/><path d="M4 9v6l4-3zM16 3l5 2v14l-5 2-8-7-4 4-2-1V7l2-1 4 4zm0 6l-4 3 4 3z" fill="#fff"/></svg></button>
        <button aria-label="Батарея"><svg viewBox="0 0 24 24"><path d="M6 4q6-4 12 0v16q-6 4-12 0z" fill="#d8b878"/><path d="M6 4q6-4 12 0v3H6z" fill="#eee"/><path d="M13 8l-4 5h3l-1 5 4-6h-3z" fill="#222"/></svg></button>
        <button aria-label="Редактор"><svg viewBox="0 0 24 24"><path d="M2 1h18v22H2z" fill="#e8f0dc"/><path d="M2 12h18v11H2z" fill="#5aa02a"/><path d="M5 6h2v4H5zM9 6h5" stroke="#222" fill="none"/><path d="M11 15l9-12 3 2-9 11z" fill="#8c6" stroke="#363"/></svg></button>
        <button class="cvavr" aria-label="CodeVision">CV<small>AVR</small></button>
        <button class="run" aria-label="Плеер"><svg viewBox="0 0 24 24"><path d="M2 2h17v18H2z" fill="#7aa8cc"/><path d="M6 5h16v18H6z" fill="#a8c8e0" opacity="0.7"/><circle cx="12" cy="12" r="7" fill="#e8862a"/><path d="M10 8v8l6-4z" fill="#fff"/></svg></button>
        <button aria-label="GitHub"><svg viewBox="0 0 24 24"><circle cx="12" cy="12" r="11" fill="#6c3a90" stroke="#cbb4dc" stroke-width="2"/><path d="M6 6l3 2h6l3-2v9q-2 4-6 4t-6-4z" fill="#fff"/></svg></button>
        <button aria-label="Paint"><svg viewBox="0 0 24 24"><path d="M2 13C2 6 9 3 14 5s8 8 4 9-4 2-4 5-11 4-12-6z" fill="#dce8f0"/><circle cx="7" cy="11" r="2" fill="#3a7fd0"/><circle cx="12" cy="8" r="2" fill="#c8502a"/><circle cx="7" cy="16" r="2" fill="#3aa04a"/><path d="M21 1l-5 20" stroke="#c88850" stroke-width="3"/></svg></button>
        <button aria-label="SourceTree"><svg viewBox="0 0 24 24"><path d="M12 0l11 6v12l-11 6-11-6V6z" fill="#1a4f80"/><path d="M6 15l9-10M12 9l6 3q0 4-5 3l-2 5" fill="none" stroke="#fff" stroke-width="3"/></svg></button>
        <button aria-label="Браузер"><svg viewBox="0 0 24 24"><circle cx="12" cy="12" r="11" fill="#2a8098"/><path d="M14 1Q1 5 4 15q5 9 15 5-9-1-9-9 0-6 4-10z" fill="#a4d8e4"/><circle cx="15" cy="9" r="4" fill="#9cd0dc"/></svg></button>
        <button aria-label="Everything"><svg viewBox="0 0 24 24"><circle cx="14" cy="9" r="7" fill="none" stroke="#f07c14" stroke-width="4"/><path d="M9 15l-7 7" stroke="#f07c14" stroke-width="5"/></svg></button>
        <button class="run pdf" aria-label="PDF"><b>PDF</b></button>
        <button class="run current" aria-label="PIExpert"><svg viewBox="0 0 24 24"><path d="M7 7l-4 5 1 5 7 5M17 9l4 5-2 5-6 3" fill="none" stroke="#c8481c" stroke-width="2"/><path d="M8 1h8v12H8z" fill="#888"/><path d="M10 5h6v6h-6z"/><path d="M10 13v7M14 13v8" stroke="#999"/></svg></button>
        <span class="fill"></span>
        <div class="tray">
            <svg viewBox="0 0 24 24"><circle cx="9" cy="11" r="3" fill="none" stroke="#fff"/><path d="M3 21q1-6 6-6t5 5" fill="none" stroke="#fff"/><circle cx="16" cy="6" r="3" fill="none" stroke="#fff"/><path d="M13 12q7-5 8 3" fill="none" stroke="#fff"/></svg>
            <svg class="narrow" viewBox="0 0 24 24"><path d="M6 14l6-6 6 6" fill="none" stroke="#fff" stroke-width="2"/></svg>
            <svg viewBox="0 0 24 24"><path d="M7 7h15v9H7zM2 5h4v4H2zM4 9v11h8M12 16v4" fill="none" stroke="#fff"/><circle cx="17" cy="16" r="5" fill="#d0282e"/><path d="M15 14l4 4M19 14l-4 4" stroke="#fff"/></svg>
            <svg viewBox="0 0 24 24"><path d="M3 10h3l5-4v12l-5-4H3zM14 10q2 2 0 4M17 8q3 4 0 8M20 6q4 6 0 12" fill="none" stroke="#fff"/></svg>
            <span class="lang">ENG</span>
            <time>13:18<br>28.12.2018</time>
            <svg class="note" viewBox="0 0 24 24"><path d="M4 4h16v14h-6v3l-3-3H4z" fill="none" stroke="#fff"/></svg>
        </div>
    </div>
</body>
</html>
```

FILE: styles.css
```css
* {
    box-sizing: border-box;
}
body {
    margin: 0;
    min-height: 100vh;
    display: flex;
    flex-direction: column;
    font-family: "Noto Sans", "Open Sans", sans-serif;
    font-size: 11px;
    color: #111;
    background: #cdd3dd;
    overflow: hidden;
}
button {
    padding: 0;
    border: 0;
    background: none;
    font: inherit;
    color: inherit;
    display: flex;
    align-items: center;
    justify-content: center;
}
a {
    color: inherit;
    text-decoration: none;
}
ul {
    list-style: none;
    margin: 0;
    padding: 0;
}
.sprites {
    display: none;
}
.icon {
    width: 16px;
    height: 16px;
    flex: none;
}
.mini {
    width: 10px;
    height: 10px;
}
.fill {
    flex: 1;
}
.window {
    flex: 1;
    display: flex;
    flex-direction: column;
}

/* title and menu */
.titlebar {
    height: 23px;
    display: flex;
    align-items: center;
    padding-left: 3px;
    background: #fff;
}
.caption {
    flex: 1;
    margin-left: 4px;
}
.winbtn {
    width: 46px;
    height: 20px;
}
.winbtn svg {
    width: 10px;
    height: 10px;
}
.menu {
    height: 24px;
    display: flex;
    align-items: center;
    gap: 15px;
    padding-left: 10px;
    color: #5a5f69;
}

/* toolbars */
.toolbars {
    height: 26px;
    display: flex;
    gap: 2px;
    border-bottom: 1px solid #9ba3b0;
}
.bar {
    height: 25px;
    display: flex;
    align-items: center;
    border-radius: 3px;
    background: linear-gradient(#f2f4fa, #e2e5f0 50%, #c6cbd9);
}
.bar-main {
    margin-right: 262px;
    padding-left: 1px;
}
.bar button {
    width: 24px;
    height: 22px;
}
.bar .on {
    border: 1px solid #9a8a62;
    background: linear-gradient(#fbd8a8, #f7b45c 50%, #fddc90);
}
.grip {
    width: 3px;
    height: 15px;
    margin: 0 3px;
    background: repeating-linear-gradient(#9ba0ae 0 2px, transparent 2px 4px);
}
.sep {
    width: 1px;
    height: 14px;
    margin: 0 4px;
    background: #a8adba;
}
.cap {
    width: 9px;
    height: 25px;
    margin-left: 2px;
    border-radius: 0 3px 3px 0;
    background: linear-gradient(#bfc3cc, #969ca9);
    display: flex;
    align-items: flex-end;
    justify-content: center;
}
.cap::after {
    content: "";
    margin-bottom: 4px;
    border: 3px solid transparent;
    border-top-color: #fff;
    border-bottom: 0;
}

/* navigation panel */
.main {
    flex: 1;
    display: flex;
    gap: 6px;
    min-height: 0;
}
.panel {
    width: 199px;
    display: flex;
    flex-direction: column;
    background: #fff;
    border-left: 1px solid #6d7078;
    border-bottom: 1px solid #9ba3b0;
    margin-bottom: 3px;
}
.panel-head {
    height: 22px;
    display: flex;
    align-items: center;
    gap: 6px;
    padding: 0 4px 0 3px;
    color: #555a63;
    background: linear-gradient(#c6cad3, #adb3be);
    border-bottom: 1px solid #6b5f6b;
}
.panel-head span {
    flex: 1;
}
.tree {
    flex: 1;
    overflow: hidden;
    white-space: nowrap;
}
.row, .items li {
    height: 18px;
    display: flex;
    align-items: center;
}
.row b, .row span, .items span {
    flex: none;
    margin-left: 4px;
    padding-left: 1px;
    line-height: 18px;
}
.root {
    padding-left: 1px;
}
.design {
    padding-left: 5px;
}
.box {
    flex: none;
    width: 9px;
    height: 9px;
    border: 1px solid #8f959f;
    background: linear-gradient(#444, #444) center / 5px 1px no-repeat #fff;
}
.dash {
    flex: none;
    width: 6px;
    height: 1px;
    background: repeating-linear-gradient(90deg, transparent 0 1px, #777 1px 2px);
}
.groups > li {
    padding-left: 24px;
    background: repeating-linear-gradient(#777 0 1px, transparent 1px 2px) 28px 0 / 1px 100% no-repeat;
}
.groups > li:last-child {
    background-size: 1px 9px;
}
.items {
    padding-left: 23px;
}
.items li::before {
    content: "";
    flex: none;
    width: 11px;
    height: 18px;
    background:
        repeating-linear-gradient(#777 0 1px, transparent 1px 2px) 0 0 / 1px 100% no-repeat,
        repeating-linear-gradient(90deg, #777 0 1px, transparent 1px 2px) 0 9px / 100% 1px no-repeat;
}
.items li:last-child::before {
    background-size: 1px 9px, 100% 1px;
}
.selected {
    background: #efecee;
}

/* scrollbars */
.hscroll {
    height: 16px;
    display: flex;
    background: #f0f0f0;
}
.hscroll button {
    width: 18px;
}
.track {
    flex: 1;
}
.thumb {
    width: 62%;
    height: 100%;
    background: #cbcdca;
}
.wide {
    width: 80%;
}

/* document area */
.work {
    flex: 1;
    min-width: 0;
    display: flex;
    flex-direction: column;
    padding: 0 4px 2px 1px;
    border-left: 1px solid #8e96a4;
    background: #d9dee8;
}
.doctabs {
    height: 21px;
    display: flex;
    align-items: center;
    margin: 0 -4px 1px -1px;
    padding-right: 6px;
    background: linear-gradient(#d3d8e2, #eaedf5);
    border-bottom: 1px solid #8e96a4;
}
.arr {
    width: 18px;
    height: 20px;
}
.back {
    width: 14px;
}
.slope {
    width: 18px;
    height: 21px;
    margin-left: 2px;
}
.doctab {
    height: 20px;
    padding: 0 11px;
    background: #fff;
    border-top: 1px solid #7d8490;
    border-right: 1px solid #7d8490;
    font-family: Roboto, sans-serif;
    font-weight: bold;
}
.sheet {
    flex: 1;
    min-height: 0;
    background: #fff;
    border: 1px solid #9aa2b0;
    border-bottom: 0;
}
.schematic {
    display: block;
    width: 100%;
    height: 100%;
}
.wire {
    fill: none;
    stroke: #000;
    stroke-width: 2;
}
.part {
    stroke: #000;
    stroke-width: 3;
}
.thin {
    fill: none;
    stroke: #000;
    stroke-width: 1;
}
.dots circle {
    stroke: #000;
    stroke-width: 1;
}
.label {
    font-family: "Liberation Sans", sans-serif;
    font-size: 16px;
    text-anchor: middle;
}
.pin {
    font-size: 13px;
}
.strong {
    font-weight: bold;
}

.viewtabs {
    height: 31px;
    display: flex;
    align-items: flex-start;
    padding-right: 5px;
    border: 1px solid #9aa2b0;
    border-top-color: #666;
    background: linear-gradient(#eceef6, #c9cdd7);
}
.viewtabs .arr {
    height: 28px;
}
.viewslope {
    width: 32px;
    height: 29px;
}
.viewtab {
    height: 29px;
    gap: 5px;
    padding: 0 7px;
    border: 1px solid #777;
    border-width: 0 1px 1px 0;
    border-radius: 0 0 3px 6px;
    background: linear-gradient(#dfe2ea, #eef0f6);
    white-space: nowrap;
}
.active {
    background: #fff;
    padding: 0 3px 0 0;
    gap: 3px;
    font-weight: bold;
}
.tabicon {
    width: 23px;
    height: 23px;
}

.output {
    height: 205px;
    margin-top: 4px;
    display: flex;
    flex-direction: column;
    justify-content: space-between;
    background: #fff;
    border: 1px solid #8e96a4;
    border-width: 1px 1px 2px;
}
.output p {
    margin: 19px 0 0 25px;
    font: bold 16px "Liberation Sans", sans-serif;
    color: #0d4a80;
}
.results {
    height: 21px;
    display: flex;
    align-items: center;
    background: linear-gradient(#dde0e6, #a4aab5 50%, #c0c4cb);
    border-bottom: 2px solid #fff;
    white-space: nowrap;
}
.results span {
    height: 19px;
    line-height: 19px;
    border-right: 1px solid #777;
    text-align: center;
    overflow: hidden;
}
.results .nosep {
    border: 0;
}
.off {
    color: #8f949d;
}
.w11 { width: 13px; }
.w12 { width: 12px; }
.w14 { width: 14px; }
.w22 { width: 22px; }
.w23 { width: 23px; }
.w24 { width: 26px; }
.w28 { width: 28px; }
.w31 { width: 29px; }
.w33 { width: 33px; }
.w35 { width: 35px; }
.w38 { width: 36px; }
.w39 { width: 39px; }
.w106 { width: 107px; }
.w320 { width: 320px; }

.status {
    height: 18px;
    display: flex;
    justify-content: flex-end;
    border-top: 1px solid #9ba3b0;
    background: linear-gradient(#dfe3ea, #a9afba 60%, #b8bcc6);
}
.status span {
    width: 31px;
    line-height: 17px;
    text-align: center;
    border-left: 1px solid #8a909b;
}
.status .wide-cell {
    width: 105px;
}

/* taskbar */
.taskbar {
    height: 40px;
    display: flex;
    background: #050505;
    color: #fff;
}
.taskbar button {
    width: 49px;
    height: 40px;
}
.taskbar svg {
    width: 24px;
    height: 24px;
}
.taskbar .cvavr {
    flex-direction: column;
    font: bold 16px/12px "Liberation Sans", sans-serif;
    color: #e01818;
}
.cvavr small {
    font-size: 11px;
    line-height: 11px;
}
.taskbar .run {
    border-bottom: 3px solid #76b9ed;
    padding-top: 3px;
}
.taskbar .current {
    background: #333;
}
.pdf b {
    padding: 6px 0;
    font-size: 10px;
    line-height: 10px;
    color: #111;
    background: #f2e01c;
    border-radius: 8px 0 0 0;
}
.tray {
    display: flex;
    align-items: center;
    padding-right: 20px;
}
.tray .narrow {
    margin: 0 1px 0 11px;
}
.lang {
    margin: 0 12px 0 7px;
}
time {
    text-align: center;
    line-height: 18px;
}
.tray .note {
    margin-left: 13px;
}
```
